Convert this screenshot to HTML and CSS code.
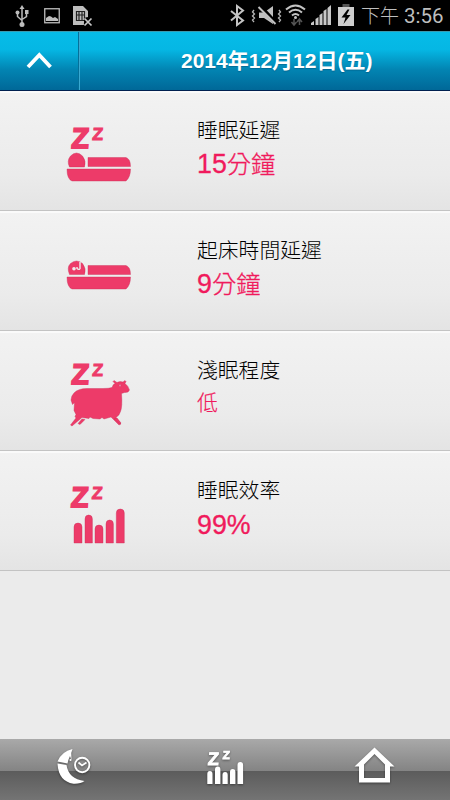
FILE: index.html
```
<!DOCTYPE html>
<html lang="zh-Hant">
<head>
	<meta charset="UTF-8">
	<title>睡眠記錄</title>
	<link rel="stylesheet" href="styles.css">
</head>
<body>
	<div id="container">
		<div id="status">
			<svg class="notice" width="100" height="31" viewBox="0 0 100 31">
				<!-- usb -->
				<g fill="none" stroke="#bdbdbd" stroke-width="1.5">
					<path d="M22 8V24M17.5 13v3.5l4.5 4M26.5 11v5.5l-4.500 3"/>
				</g>
				<path d="M22 5l2.500 4h-5z" fill="#bdbdbd"/>
				<circle cx="22" cy="24.500" r="2.500" fill="#bdbdbd"/>
				<circle cx="17.500" cy="12.500" r="2" fill="#bdbdbd"/>
				<rect x="25" y="10" width="3.500" height="4" fill="#bdbdbd"/>
				<!-- picture -->
				<rect x="44.750" y="8.750" width="14.500" height="14" fill="none" stroke="#bdbdbd" stroke-width="1.300"/>
				<path d="M46 21v-3l3-2 2 .5 2 1.500 2-1 3 2v2z" fill="#bdbdbd"/>
				<!-- sim -->
				<path d="M73 6h10l5 5v6l-4 1v7H73z" fill="#bdbdbd"/>
				<path d="M76.500 11.500h8v9h-8zM76.500 15h8M79 11.500v9M82 11.500v9" fill="none" stroke="#222" stroke-width="1.200"/>
				<path d="M85 19l6.500 6.500M91.500 19L85 25.500" stroke="#000" stroke-width="4"/>
				<path d="M84.500 18.500l7 7M91.500 18.500l-7 7" stroke="#c8c8c8" stroke-width="1.700"/>
			</svg>
			<div class="system">
				<svg width="130" height="31" viewBox="226 0 130 31">
					<!-- bluetooth -->
					<path d="M231 11l12 9.500-6 4.500V6l6 4.500L231 20.500" fill="none" stroke="#c4c4c4" stroke-width="2"/>
					<!-- vibrate -->
					<path d="M254 10l-1.500 2 2 2-2 2 2 2-2 2 1.500 2M279 10l1.500 2-2 2 2 2-2 2 2 2-1.500 2" fill="none" stroke="#b5b5b5" stroke-width="1.300"/>
					<path d="M259 12.500h5l9-6.500v18l-9-6h-5z" fill="#c0c0c0"/>
					<path d="M261 7l14 15" stroke="#000" stroke-width="4"/>
					<path d="M258.500 7l17 17" stroke="#c0c0c0" stroke-width="2"/>
					<!-- wifi -->
					<g fill="none" stroke="#c4c4c4" stroke-width="2">
						<path d="M286 9.500q9.500-8 19 0M289 12.500q6.500-5.500 13 0M292 15.500q3.500-3 7 0"/>
					</g>
					<circle cx="295.500" cy="17.500" r="1.500" fill="#c4c4c4"/>
					<path d="M294 19v5M291.500 22l2.500 3 2.500-3M299.500 25v-5M297 22l2.500-3 2.500 3" fill="none" stroke="#555" stroke-width="1.500"/>
					<!-- signal -->
					<path d="M311 25v-2l3-2v4zM315.500 25v-6l3-2v8zM319.500 25v-10l3-2v12zM323.500 25v-14l3-2v16zM327.500 25V8l3.500-3v20z" fill="#c8c8c8"/>
					<!-- battery -->
					<path d="M342.500 4h7v3h-7z" fill="#555"/>
					<rect x="338" y="7" width="16" height="19" fill="#cecece"/>
					<path d="M347.500 9.500l-6 8h4l-2 6.500 7-9h-4l3-5.500z" fill="#000"/>
				</svg>
				<span class="clock"><i>下午</i> 3:56</span>
			</div>
		</div>

		<div id="header">
			<a class="back">
				<svg width="26" height="20" viewBox="26 51 26 20"><path d="M28 68l11.300-12L50.500 68" fill="none" stroke="#fff" stroke-width="3.800"/></svg>
			</a>
			<h1>2014年12月12日(五)</h1>
		</div>

		<ul id="list">
			<li>
				<svg class="icon" width="80" height="80" viewBox="60 110 80 80">
					<g class="zz"><text transform="translate(71 148.200) skewX(-4)" font-size="28.500">Z</text><text class="small" transform="translate(92 140.200) skewX(-4)" font-size="17.500">Z</text></g>
					<g class="pink">
						<path d="M69.500 167q-3-6 1-11 6-6 12 0 4 5 2 11z"/>
						<path d="M88 157.500h38q4.500 1.500 4.500 9H88z"/>
						<path d="M67 169h63.500q0 8-4.500 12H72q-5-2-5-12z"/>
					</g>
				</svg>
				<div class="info"><h2>睡眠延遲</h2><p>15<span>分鐘</span></p></div>
			</li>
			<li>
				<svg class="icon" width="80" height="80" viewBox="60 230 80 80">
					<g class="pink">
						<path d="M69.500 274.500q-3-7 1-11 6-5 12 0 4 5 2 11z"/>
						<path d="M88 265.500h38q4.500 1.500 4.500 9H88z"/>
						<path d="M67 277h63.500q0 8-4.500 12H72q-5-2-5-12z"/>
					</g>
					<circle cx="74" cy="268.700" r="1.800" fill="#eee"/>
					<path d="M80 262v7M77 267v1.500q1.500 1.500 3 .5" fill="none" stroke="#eee" stroke-width="1.400"/>
				</svg>
				<div class="info"><h2>起床時間延遲</h2><p>9<span>分鐘</span></p></div>
			</li>
			<li>
				<svg class="icon" width="80" height="80" viewBox="60 350 80 80">
					<g class="zz"><text transform="translate(71 384.200) skewX(-4)" font-size="28.500">Z</text><text class="small" transform="translate(92 376.200) skewX(-4)" font-size="17.500">Z</text></g>
					<g class="pink">
						<path d="M71 400q0-4 3-7 4-4.500 13-4.500h16q6 0 9-1 1-3.500 3-4l-2-2 1-1 3 2q3-1.500 6-.5l2-1.500 1 1-1 2q3.500 2.500 4.500 6.500-1 3-5 2.500l-3 1q1 13-1 18-1 4-4.500 6l5 6.500-2 1-8-8-7 2-2-1.500-2 1.500-7-.5-3-1.500-1 1.500-7-1-10 8.500-1.500-1 5.500-7-1-1.500 1-2-2-4 .5-8-2 2z"/>
						<path d="M82 419l3 .5-5 5-2-1zM114 419l3-1 4 5-1 1z"/>
						<circle cx="120" cy="385.500" r=".9" fill="#f5b5c8"/>
					</g>
				</svg>
				<div class="info"><h2>淺眠程度</h2><p class="level">低</p></div>
			</li>
			<li>
				<svg class="icon" width="80" height="80" viewBox="60 470 80 80">
					<g class="zz"><text transform="translate(70.500 507) skewX(-4)" font-size="28.500">Z</text><text class="small" transform="translate(91.500 498.700) skewX(-4)" font-size="17.500">Z</text></g>
					<g class="pink">
						<path d="M74 543v-16q0-4 4-4t4 4v16zM85 543v-24q0-4 3.700-4t3.700 4v24zM95 543v-14q0-4 4-4t4 4v14zM106 543v-19q0-4 3.700-4t3.700 4v19zM116.300 543v-30q0-4 4-4t4 4v30z"/>
					</g>
				</svg>
				<div class="info"><h2>睡眠效率</h2><p class="rate">99%</p></div>
			</li>
		</ul>

		<div id="footer">
			<a>
				<svg width="36" height="38" viewBox="57.500 747 36 38">
					<path d="M58 761.500q4-10 15-12.500l-1.300 4 .3 7-1.500-4q-2 4-2.500 7.500z" fill="#fff"/>
					<circle cx="71" cy="760" r="1" fill="#fff"/>
					<path d="M58 763.500l9 1.500q2 14 18 16-4 3-11 2.700-15-2.200-16-20.200z" fill="#fff"/>
					<circle cx="82.700" cy="765" r="7.200" fill="none" stroke="#fff" stroke-width="1.900"/>
					<path d="M79 762.500l3.500 3 4.500-3" fill="none" stroke="#fff" stroke-width="1.700"/>
				</svg>
			</a>
			<a>
				<svg width="40" height="38" viewBox="205 747 40 38">
					<g class="zz white"><text transform="translate(207.500 764.500) skewX(-4)" font-size="18">Z</text><text transform="translate(222.500 759) skewX(-4)" font-size="11.500">Z</text></g>
					<path d="M207.300 784v-10q0-3 2.600-3t2.600 3v10zM215 784v-14.500q0-3 2.700-3t2.700 3v14.500zM222.500 784v-9q0-3 2.600-3t2.600 3v9zM230 784v-12q0-3 2.700-3t2.700 3v12zM237.500 784v-19q0-3 2.800-3t2.800 3v19z" fill="#fff"/>
				</svg>
			</a>
			<a>
				<svg width="42" height="38" viewBox="354 747 42 38">
					<path d="M374.500 747.500l20 19h-4.500v16h-31v-16h-4.500zM374.500 754L364 764.500v13.500h21v-13.500z" fill="#fff" fill-rule="evenodd"/>
				</svg>
			</a>
		</div>
	</div>
</body>
</html>
```
FILE: styles.css
```
*{
	margin:0;
	padding:0;
	box-sizing:border-box;
}
body{
	font-family:"Liberation Sans","Noto Sans CJK TC",sans-serif;
	background:#ebebeb;
}
#container{
	width:450px;
	height:800px;
	overflow:hidden;
	display:flex;
	flex-direction:column;
}
svg{
	display:block;
}
#status{
	height:31px;
	background:#000;
	display:flex;
	justify-content:space-between;
}
.system{
	display:flex;
	width:224px;
}
.clock{
	font-family:Roboto,"Noto Sans CJK TC",sans-serif;
	font-size:20.5px;
	line-height:32px;
	color:#bebebe;
	white-space:nowrap;
	padding-left:5px;
}
.clock i{
	font-style:normal;
	font-weight:300;
	font-size:19px;
}
#header{
	height:60px;
	display:flex;
	color:#fff;
	border-top:1px solid #3a9ab0;
	border-bottom:1px solid #002050;
	background:linear-gradient(#06bce8,#05b7e4 30%,#0284b2 65%,#006898);
}
.back{
	width:80px;
	display:flex;
	align-items:center;
	justify-content:center;
	border-right:1px solid #38a9d2;
	box-shadow:inset -1px 0 #047099;
}
.back svg{
	margin:0 1px 2px 0;
}
#header h1{
	font-size:21px;
	line-height:58px;
	padding-left:101px;
	white-space:nowrap;
	text-shadow:0 1px 1px rgba(0,40,80,.3);
}
#list{
	list-style:none;
	flex:1;
}
#list li{
	height:120px;
	display:flex;
	border-top:2px solid #fafafa;
	border-bottom:1px solid #c3c3c3;
	background:linear-gradient(#f2f2f2,#ebebeb 70%,#e4e4e4);
}
.icon{
	margin:17px 57px 0 60px;
}
.pink{
	fill:#ed3b69;
	stroke:#c92d58;
	stroke-width:.4;
}
.zz{
	font-family:"Liberation Sans",sans-serif;
	font-weight:bold;
	fill:#ed3b69;
	stroke:#ed3b69;
	stroke-width:1.8;
}
.zz .small{
	stroke-width:1;
}
.white{
	fill:#fff;
	stroke:#fff;
	stroke-width:.9;
}
.info{
	padding-top:22px;
}
.info h2{
	font-size:20.8px;
	font-weight:300;
	line-height:32px;
	color:#000;
}
.info p{
	font-size:26.8px;
	line-height:34px;
	color:#f01a5c;
	-webkit-text-stroke:.3px #f01a5c;
}
.info p span{
	font-size:24.3px;
	font-weight:300;
	-webkit-text-stroke:.3px #f01a5c;
}
.info .level{
	font-size:21px;
	font-weight:300;
	line-height:31px;
	-webkit-text-stroke:.2px #f01a5c;
}
.info .rate{
	line-height:36px;
}
#footer{
	height:61px;
	display:flex;
	background:linear-gradient(#a9a9a9,#848484 52%,#5c5c5c 53%,#747474);
}
#footer a{
	flex:1;
	display:flex;
	justify-content:center;
	padding-top:8px;
	filter:drop-shadow(0 1px 1px rgba(0,0,0,.4));
}
```
